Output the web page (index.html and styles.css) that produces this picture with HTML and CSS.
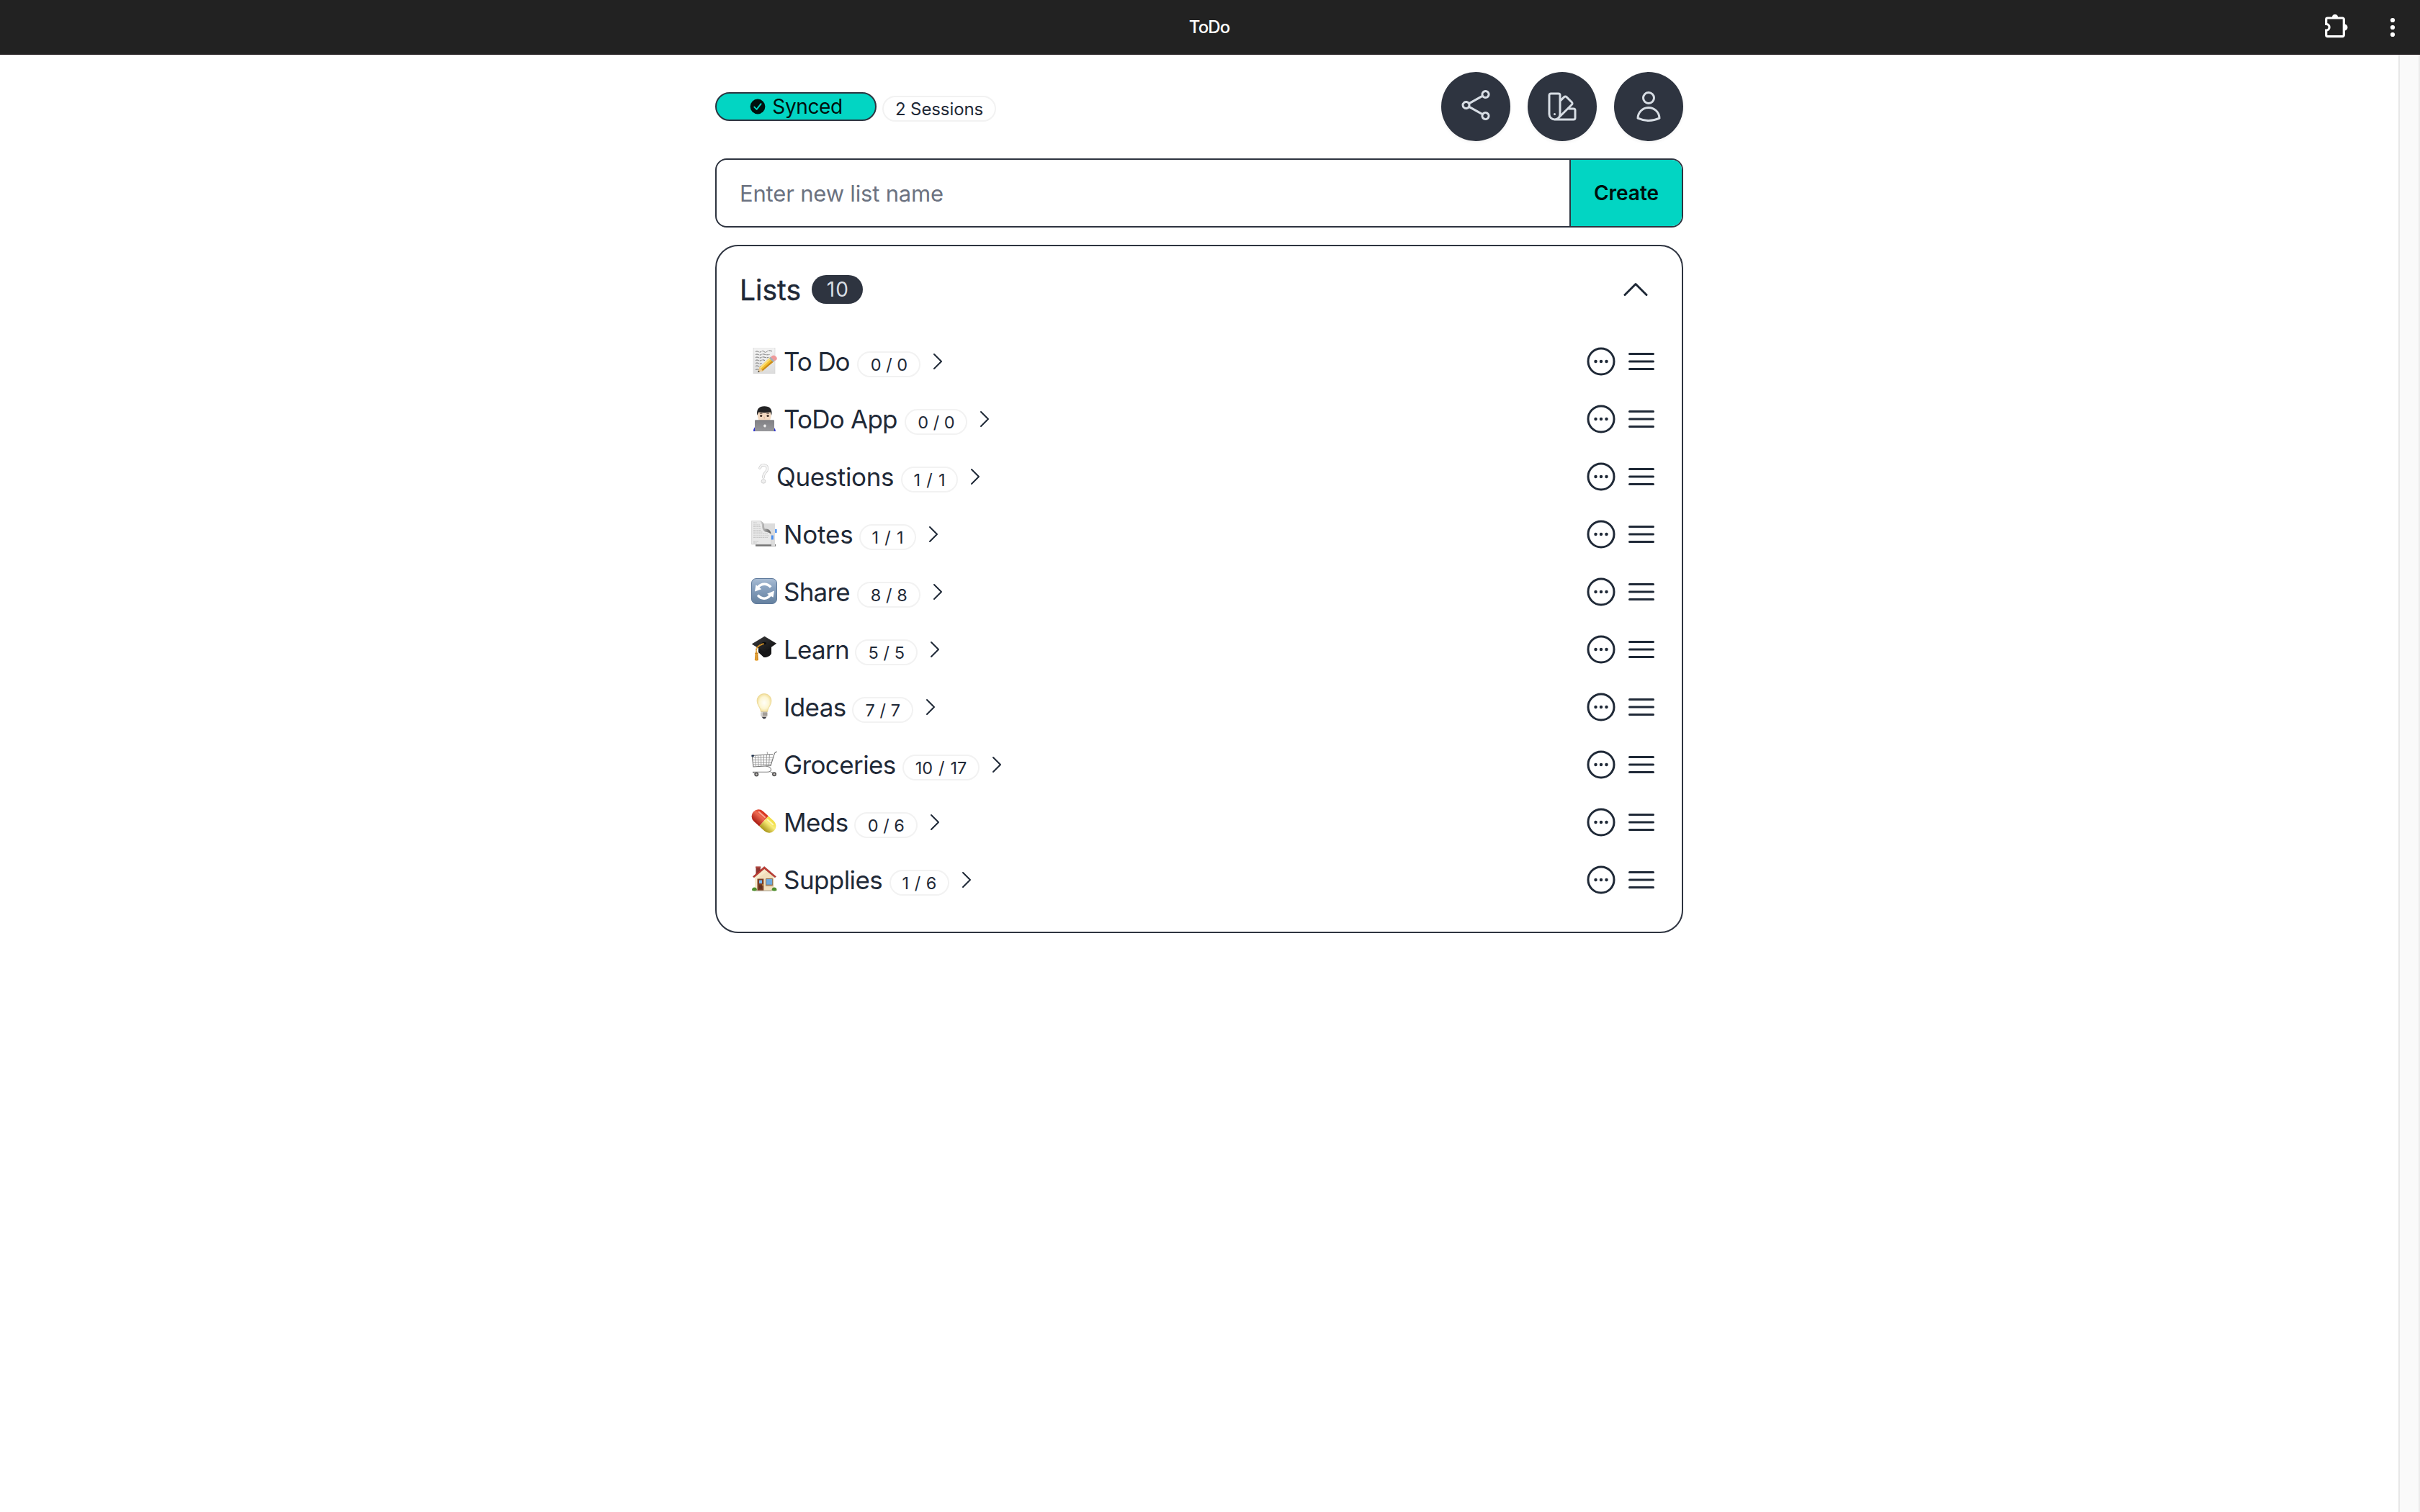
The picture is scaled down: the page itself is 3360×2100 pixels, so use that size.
FILE: index.html
```html
<!DOCTYPE html>
<html lang="en">
<head>
<meta charset="utf-8">
<title>ToDo</title>
<link rel="stylesheet" href="styles.css">
</head>
<body>
<svg class="defs" aria-hidden="true">
  <defs>
    <linearGradient id="gPaper" x1="0" y1="0" x2="0" y2="1"><stop offset="0" stop-color="#f4f4f4"/><stop offset="1" stop-color="#dcdcdc"/></linearGradient>
    <linearGradient id="gBlue" x1="0" y1="0" x2="0" y2="1"><stop offset="0" stop-color="#a9bdd4"/><stop offset=".35" stop-color="#8aa3c0"/><stop offset="1" stop-color="#64809f"/></linearGradient>
    <linearGradient id="gLaptop" x1="0" y1="0" x2="0" y2="1"><stop offset="0" stop-color="#808084"/><stop offset="1" stop-color="#97979b"/></linearGradient>
    <linearGradient id="gCap" x1="0" y1="0" x2="1" y2="1"><stop offset="0" stop-color="#3c3c3e"/><stop offset="1" stop-color="#0c0c0d"/></linearGradient>
    <radialGradient id="gBulb" cx=".5" cy=".5" r=".55"><stop offset="0" stop-color="#fffef8"/><stop offset=".6" stop-color="#fdf6d2"/><stop offset="1" stop-color="#efd88c"/></radialGradient>
    <linearGradient id="gRed" x1="0" y1="0" x2="0" y2="1"><stop offset="0" stop-color="#d42a16"/><stop offset=".4" stop-color="#ee6a50"/><stop offset="1" stop-color="#a81a10"/></linearGradient>
    <linearGradient id="gYellow" x1="0" y1="0" x2="0" y2="1"><stop offset="0" stop-color="#f0dc3c"/><stop offset=".4" stop-color="#f8ec78"/><stop offset="1" stop-color="#a89418"/></linearGradient>
    <linearGradient id="gFold" x1="0" y1="0" x2="1" y2="0"><stop offset="0" stop-color="#d8d8d8"/><stop offset="1" stop-color="#5c5c5c"/></linearGradient>
    <symbol id="more" viewBox="0 0 24 24"><path d="M8.625 12a.375.375 0 1 1-.75 0 .375.375 0 0 1 .75 0Zm0 0H8.25m4.125 0a.375.375 0 1 1-.75 0 .375.375 0 0 1 .75 0Zm0 0H12m4.125 0a.375.375 0 1 1-.75 0 .375.375 0 0 1 .75 0Zm0 0h-.375M21 12a9 9 0 1 1-18 0 9 9 0 0 1 18 0Z"/></symbol>
    <symbol id="bars" viewBox="0 0 24 24"><path d="M3.75 6.75h16.5M3.75 12h16.5m-16.5 5.25h16.5"/></symbol>
    <symbol id="next" viewBox="0 0 24 24"><path d="m8.25 4.5 7.5 7.5-7.5 7.5"/></symbol>
  </defs>
</svg>

<header class="titlebar">
  <span class="titlebar-name">ToDo</span>
  <svg class="puzzle" viewBox="0 0 36 36"><path d="M5.5 7h21a1.8 1.8 0 0 1 1.8 1.8v22a1.8 1.8 0 0 1-1.8 1.8h-21a1.8 1.8 0 0 1-1.8-1.8v-6.6a4.4 4.4 0 0 0 0-8.8V8.8A1.8 1.8 0 0 1 5.5 7Z" fill="none" stroke="#fff" stroke-width="3.2"/><path d="M12 6a4 4 0 0 1 8 0ZM29 15.5a4 4 0 0 1 0 9Z" fill="#fff"/></svg>
  <svg class="kebab" viewBox="0 0 8 28"><circle cx="4" cy="4" r="3.1"/><circle cx="4" cy="14" r="3.1"/><circle cx="4" cy="24" r="3.1"/></svg>
</header>

<div class="viewport">
  <main class="app">
    <div class="toolbar">
      <div class="synced"><svg class="check" viewBox="0 0 22 22"><circle cx="11" cy="11" r="10.4"/><path d="m6.3 11.6 3.3 3.3 6-7.7"/></svg><span>Synced</span></div>
      <div class="pill sessions">2 Sessions</div>
      <div class="actions">
        <button class="round"><svg class="icon lift" viewBox="0 0 24 24"><path d="M7.217 10.907a2.25 2.25 0 1 0 0 2.186m0-2.186c.18.324.283.696.283 1.093s-.103.77-.283 1.093m0-2.186 9.566-5.314m-9.566 7.5 9.566 5.314m0 0a2.25 2.25 0 1 0 3.935 2.186 2.25 2.25 0 0 0-3.935-2.186Zm0-12.814a2.25 2.25 0 1 0 3.933-2.185 2.25 2.25 0 0 0-3.933 2.185Z"/></svg></button>
        <button class="round"><svg class="icon" viewBox="0 0 24 24"><path d="M4.098 19.902a3.75 3.75 0 0 0 5.304 0l6.401-6.402M6.75 21A3.75 3.75 0 0 1 3 17.25V4.125C3 3.504 3.504 3 4.125 3h5.25c.621 0 1.125.504 1.125 1.125v4.072M6.75 21a3.75 3.75 0 0 0 3.75-3.75V8.197M6.75 21h13.125c.621 0 1.125-.504 1.125-1.125v-5.25c0-.621-.504-1.125-1.125-1.125h-4.072M10.5 8.197l2.88-2.88c.438-.439 1.15-.439 1.59 0l3.712 3.713c.44.44.44 1.152 0 1.59l-2.879 2.88M6.75 17.25h.008v.008H6.75v-.008Z"/></svg></button>
        <button class="round"><svg class="icon" viewBox="0 0 24 24"><path d="M15.75 6a3.75 3.75 0 1 1-7.5 0 3.75 3.75 0 0 1 7.5 0ZM4.501 20.118a7.5 7.5 0 0 1 14.998 0A17.933 17.933 0 0 1 12 21.75c-2.676 0-5.216-.584-7.499-1.632Z"/></svg></button>
      </div>
    </div>

    <div class="create">
      <div class="create-input">Enter new list name</div>
      <button class="create-button">Create</button>
    </div>

    <section class="card">
      <div class="card-head">
        <h2>Lists</h2>
        <span class="count">10</span>
        <svg class="icon collapse" viewBox="0 0 24 24"><path d="m4.5 15.75 7.5-7.5 7.5 7.5"/></svg>
      </div>

      <div class="row todo">
        <svg class="emoji" viewBox="0 0 36 36"><path d="M3 0h30v36H3z" fill="url(#gPaper)" stroke="#d2d2d2" stroke-width=".6"/><path d="M6 5.5q2-1.5 4 0t4-.3 4 .2 4-.3 7-.3M6 9.5q2-1.2 4 0t4 0 5-.2 7 0M6 13.5q2-1.2 4 0t4 0 5-.2 5 0M6 17.5q2-1.2 4 0t4 0 5 0M6 21.5q2-1.2 4 0t5 0M6 25.5q2-1.2 4 0t3 0M6 30.5q2-1.2 5 0" fill="none" stroke="#555" stroke-width=".8" stroke-dasharray="5 1 3 1"/><path d="m9.5 34 2-6.5L26 13.500l5.500 5.500L16 32Z" fill="#f4bf2d"/><path d="m11.500 27.500 14.500-14 1.800 1.800L13 29.200Z" fill="#fbdf7a"/><path d="m15.500 32.400 16-13.400-1.700-1.700L14.300 31Z" fill="#c88a1c"/><path d="m9.500 34 2-6.500 4.500 4.500Z" fill="#ecc998"/><path d="m9.300 34.200.8-2.600 1.700 1.700Z" fill="#333"/><path d="m25 14.500 2-2 5.500 5.500-2.100 2Z" fill="#9fb1bd"/><path d="m27 13 2.300-2q2.500-1.500 5 1 2.500 2.500 .9 4.500L32.500 18.500Z" fill="#ef9a9a"/></svg>
        <span class="name">To Do</span><span class="pill">0 / 0</span><svg class="next"><use href="#next"/></svg>
        <svg class="icon more"><use href="#more"/></svg><svg class="icon"><use href="#bars"/></svg>
      </div>
      <div class="row app-dev">
        <svg class="emoji" viewBox="0 0 36 36"><path d="M3 36q0-7 7-8h16q7 1 8 8Z" fill="#2a2fd0"/><path d="M9 11q0-6 9.300-6t9.200 6v5q-1.500 9-9.200 9T9 16Z" fill="#f3dac2"/><path d="M8.300 14C7 5 11 1.500 18 1.300S30 4.500 28.200 14l-1.500-4.500q-8 1.500-16.500 0Z" fill="#222224"/><circle cx="13.700" cy="14.500" r="1.600" fill="#3a2a22"/><circle cx="23.100" cy="14.500" r="1.600" fill="#3a2a22"/><path d="M11.800 11.600q2-1 3.600 0m6 0q2-1 3.600 0" fill="none" stroke="#3a2a22" stroke-width=".8"/><path d="M18 15.500v2.300h1.200" fill="none" stroke="#d3a685" stroke-width=".8"/><rect x="5" y="20.300" width="27" height="15.700" rx="1.200" fill="url(#gLaptop)"/><path d="M18.500 26.600c2.500-1 3 3.200.9 3.800-2.200.7-3.300-3-.9-3.800Z" fill="#eee"/></svg>
        <span class="name">ToDo App</span><span class="pill">0 / 0</span><svg class="next"><use href="#next"/></svg>
        <svg class="icon more"><use href="#more"/></svg><svg class="icon"><use href="#bars"/></svg>
      </div>
      <div class="row questions">
        <svg class="emoji" viewBox="0 0 36 36"><g fill="none" stroke-linecap="round" stroke-linejoin="round"><path d="M12 7q1.500-4.500 6-4t4.500 5q-.4 3-3 5.500-2.500 2.500-2.500 6.500" stroke="#cbcbcb" stroke-width="3.600"/><path d="M12 7q1.500-4.500 6-4t4.500 5q-.4 3-3 5.500-2.500 2.500-2.500 6.500" stroke="#f5f5f5" stroke-width="2.200"/></g><ellipse cx="17" cy="25.500" rx="3" ry="2.700" fill="#efefef" stroke="#c8c8c8" stroke-width=".8"/></svg>
        <span class="name">Questions</span><span class="pill">1 / 1</span><svg class="next"><use href="#next"/></svg>
        <svg class="icon more"><use href="#more"/></svg><svg class="icon"><use href="#bars"/></svg>
      </div>
      <div class="row notes">
        <svg class="emoji" viewBox="0 0 36 36"><path d="M6 33h28v2.800H6z" fill="#777"/><path d="M14 4h19v31.500h-5V33H14z" fill="#dcdcdc"/><path d="M33 12h2.700v5H33z" fill="#5b9bf5"/><path d="M.5.5h13q3 3 4 8 1 4 10 10V33H.5Z" fill="#e8e8e8" stroke="#cacaca" stroke-width=".6"/><path d="M12 .5q6 1 6 7 0 4 1 4 8-1 8.500 7.500-2-3-8.500-3.500Q15 13 15 8 15 3 12 .5Z" fill="url(#gFold)"/><path d="M3 3h5M3 6h9M3 8.500h10M3 11h11M3 13.500h11M3 16h13M3 18.500h20M3 21h22M3 23.500h20M3 29h7M3 31h5" stroke="#bdbdbd" stroke-width=".8" stroke-dasharray="2 .6"/><path d="M28 20.500h2.800v6H28z" fill="#4a90f2"/></svg>
        <span class="name">Notes</span><span class="pill">1 / 1</span><svg class="next"><use href="#next"/></svg>
        <svg class="icon more"><use href="#more"/></svg><svg class="icon"><use href="#bars"/></svg>
      </div>
      <div class="row share">
        <svg class="emoji" viewBox="0 0 36 36"><rect x=".5" y=".5" width="35" height="35" rx="6.500" fill="url(#gBlue)" stroke="#5f7a9b"/><g fill="none" stroke="#fff" stroke-width="3.600"><path d="M8.800 13.500Q12.500 8.300 18.500 8.300q5 0 8.700 4.200"/><path d="M27.200 22.500q-3.700 5.700-9.200 5.700-5.200 0-8.800-4.500"/></g><path d="M5 18.500 6.500 9.200l7.800 6ZM32 17.500l-1.500 9.300-8.500-5Z" fill="#fff"/></svg>
        <span class="name">Share</span><span class="pill">8 / 8</span><svg class="next"><use href="#next"/></svg>
        <svg class="icon more"><use href="#more"/></svg><svg class="icon"><use href="#bars"/></svg>
      </div>
      <div class="row learn">
        <svg class="emoji" viewBox="0 0 36 36"><path d="M10 15.500 18 21l10-6v9.500q-1 3.500-7.500 5.500h-3L10 23Z" fill="#151516"/><path d="M.7 11.500 18.500.8l16.600 10L18.500 22.500Z" fill="url(#gCap)"/><ellipse cx="18" cy="10.500" rx="3" ry="1.700" fill="#0a0a0a"/><path d="M17.500 11Q8 14 7.200 19v6" fill="none" stroke="#e09a28" stroke-width="2" stroke-dasharray="2.200 .3"/><path d="M5.500 24h3.800l.7 10q-2.600 1.600-5.200 0Z" fill="#e8a334"/><path d="M6.500 27v7m2-7v7" stroke="#b8751a" stroke-width=".6"/><path d="M5.300 23.500h4.200v2H5.300z" fill="#c98420"/></svg>
        <span class="name">Learn</span><span class="pill">5 / 5</span><svg class="next"><use href="#next"/></svg>
        <svg class="icon more"><use href="#more"/></svg><svg class="icon"><use href="#bars"/></svg>
      </div>
      <div class="row ideas">
        <svg class="emoji" viewBox="0 0 36 36"><path d="M18 .6c5.800 0 9.900 4.400 9.900 9.800 0 5-3 7.600-4.500 11.600-.5 1.400-.6 2.500-.9 3.500h-9c-.3-1-.4-2.100-.9-3.500-1.500-4-4.500-6.600-4.500-11.600C8.100 5 12.200.6 18 .6Z" fill="url(#gBulb)" stroke="#ead48e" stroke-width=".8"/><path d="M13.600 25.500h8.800v5.700l-2 2.300h-4.800l-2-2.300Z" fill="#b9b4ae"/><path d="M13.600 27.500h8.800m-8.800 2.400h8.800" stroke="#86817b" stroke-width=".8"/><path d="M15 33h6l-1.700 2.300h-2.600Z" fill="#3d3d46"/><path d="M15 26v5.500" stroke="#eee" stroke-width="1.200"/></svg>
        <span class="name">Ideas</span><span class="pill">7 / 7</span><svg class="next"><use href="#next"/></svg>
        <svg class="icon more"><use href="#more"/></svg><svg class="icon"><use href="#bars"/></svg>
      </div>
      <div class="row groceries">
        <svg class="emoji" viewBox="0 0 36 36"><g fill="none" stroke="#8b8b8b" stroke-width=".8"><path d="M1.500 9h29M2 12.500h27.500M2.500 16h26M3 19h24M5.500 7l1 14M9.500 7l.6 14M13.500 6l.3 15M17.500 6v14M21.500 5l-.4 15M25.500 5l-1 15M22 1l1 4"/></g><path d="M35.500.8 32.500 3 27 20.500 3 22 1.200 6.500 30 4.500" fill="none" stroke="#707070" stroke-width="1.100"/><path d="M20 21q7 1 7.500 4.500T22 29.200H2m25 .3 7.500 2M2 30l5 1.500" fill="none" stroke="#808080" stroke-width="1.100"/><path d="M.5 5.500h3.300v2.300H.5z" fill="#152a48"/><circle cx="7.300" cy="32.500" r="3" fill="#555"/><circle cx="32" cy="32.300" r="3" fill="#555"/><circle cx="7.300" cy="32.500" r="1.200" fill="#c8c0bc"/><circle cx="32" cy="32.300" r="1.200" fill="#c8c0bc"/></svg>
        <span class="name">Groceries</span><span class="pill">10 / 17</span><svg class="next"><use href="#next"/></svg>
        <svg class="icon more"><use href="#more"/></svg><svg class="icon"><use href="#bars"/></svg>
      </div>
      <div class="row meds">
        <svg class="emoji" viewBox="0 0 36 36"><g transform="rotate(42 17.500 17.500)"><path d="M17.500 8V27H7.500a9.500 9.500 0 0 1 0-19Z" fill="url(#gRed)"/><path d="M17.500 8V27H27.500a9.500 9.500 0 0 0 0-19Z" fill="url(#gYellow)"/><path d="M4 12.500h11" stroke="#f9a692" stroke-width="2" stroke-linecap="round"/><path d="M20 12.500h10" stroke="#fdf7b6" stroke-width="2" stroke-linecap="round"/></g></svg>
        <span class="name">Meds</span><span class="pill">0 / 6</span><svg class="next"><use href="#next"/></svg>
        <svg class="icon more"><use href="#more"/></svg><svg class="icon"><use href="#bars"/></svg>
      </div>
      <div class="row supplies">
        <svg class="emoji" viewBox="0 0 36 36"><path d="M6.500.8h6.300V9L6.500 13.500Z" fill="#8e3430"/><path d="M6 .5h7.300v2H6z" fill="#b24a42"/><path d="M5 14 18 3l13.500 11v20H5Z" fill="#f1e0bd"/><path d="M5 14 18 3l5 4-12 8v19H5Z" fill="#f7eacb"/><path d="M2.300 14.500 18.200.5l16.300 14-1.600 1.300L18.200 3.700 4 15.800Z" fill="#c23b33" stroke="#7d2420" stroke-width=".5"/><path d="M8.500 17.500h8.800V34H8.500z" fill="#7b3f25"/><path d="M11 19.500h4v4.500h-4z" fill="#77b7ec"/><path d="M11 26.500h4v5h-4z" fill="#63301b"/><circle cx="16" cy="26" r=".8" fill="#f0c040"/><path d="M20.500 17.500h9.200v8.700h-9.200z" fill="#6ca9de" stroke="#8a6a4a"/><path d="M19.800 26.500h10.600v1.200H19.800z" fill="#a88460"/><path d="M1 33.500q0-4 3.500-4T8 33.500q-3 1.800-7 0ZM28.500 33.500q0-4 3.500-4t3.500 4q-3 1.800-7 0Z" fill="#4f8f2e"/><path d="M6.500 33.500h22v1.200h-22z" fill="#b0a48e"/></svg>
        <span class="name">Supplies</span><span class="pill">1 / 6</span><svg class="next"><use href="#next"/></svg>
        <svg class="icon more"><use href="#more"/></svg><svg class="icon"><use href="#bars"/></svg>
      </div>
    </section>
  </main>
  <div class="scroll-track"></div>
</div>
</body>
</html>
```
FILE: styles.css
```css
:root {
  --neutral: #2e3440;
  --neutral-content: #d7dde4;
  --accent: #02d5c3;
  --accent-content: #00100d;
  --base-content: #1f2937;
}

* { box-sizing: border-box; }

body {
  margin: 0;
  height: 2100px;
  overflow: hidden;
  display: flex;
  flex-direction: column;
  background: #fff;
  color: var(--base-content);
  font-family: Inter, "Liberation Sans", sans-serif;
}

button { font: inherit; border: 0; padding: 0; }
svg { display: block; flex: none; }
.defs { position: absolute; width: 0; height: 0; }

/* window title bar */
.titlebar {
  display: flex;
  flex: none;
  align-items: flex-start;
  height: 76px;
  padding-right: 34px;
  background: #222;
  border-bottom: 1px solid #1b1518;
}
.titlebar-name {
  flex: 1;
  padding-left: 132px;
  font-size: 24px;
  font-weight: 500;
  line-height: 75px;
  letter-spacing: -0.9px;
  text-align: center;
  color: #fff;
}
.puzzle { width: 36px; height: 36px; margin: 18px 56px 0 0; }
.kebab { width: 8px; height: 28px; margin-top: 24px; fill: #fff; }

.viewport { flex: 1; display: flex; }
.scroll-track {
  width: 30px;
  background: #fafafa;
  border-left: 2px solid #e8e8e8;
  border-right: 2px solid #ececec;
}

.app {
  flex: 1;
  display: flex;
  flex-direction: column;
  align-items: center;
  gap: 24px;
  padding-top: 24px;
}
.app > * { width: 1344px; }

.icon {
  width: 48px;
  height: 48px;
  fill: none;
  stroke: currentColor;
  stroke-width: 1.5;
  stroke-linecap: round;
  stroke-linejoin: round;
}

/* status and actions */
.toolbar { display: flex; align-items: center; height: 96px; }
.synced {
  display: flex;
  align-items: center;
  justify-content: center;
  gap: 9px;
  width: 224px;
  height: 40px;
  padding-left: 1px;
  border: 2px solid var(--neutral);
  border-radius: 20px;
  background: var(--accent);
  color: var(--accent-content);
  font-size: 28px;
  line-height: 36px;
  letter-spacing: -0.4px;
}
.check { width: 22px; height: 22px; fill: var(--accent-content); }
.check path { fill: none; stroke: var(--accent); stroke-width: 2; stroke-linecap: round; stroke-linejoin: round; }

.pill {
  flex: none;
  width: var(--pill, 88px);
  height: 36px;
  margin-top: 8px;
  border: 2px solid #f2f2f2;
  border-radius: 18px;
  font-size: 23.5px;
  line-height: 34px;
  letter-spacing: var(--pill-track, 0);
  word-spacing: var(--pill-gap, 0);
  text-align: center;
  white-space: nowrap;
}
.sessions { --pill: 158px; --pill-track: -0.1px; margin: 6px 0 0 8px; font-size: 24px; }

.actions { display: flex; gap: 24px; margin-left: auto; }
.round {
  display: grid;
  place-items: center;
  width: 96px;
  height: 96px;
  border-radius: 50%;
  background: var(--neutral);
  color: var(--neutral-content);
  box-shadow: 0 2px 4px rgba(0, 0, 0, .05);
}
.lift { margin-bottom: 4px; }

/* new list form */
.create {
  display: flex;
  height: 96px;
  border: 2px solid var(--neutral);
  border-radius: 16px;
  overflow: hidden;
}
.create-input {
  flex: 1;
  padding-left: 32px;
  font-size: 31px;
  line-height: 93px;
  letter-spacing: -0.18px;
  color: #6b7280;
}
.create-button {
  width: 156px;
  border-left: 2px solid var(--neutral);
  background: var(--accent);
  color: var(--accent-content);
  font-size: 28px;
  font-weight: 600;
  line-height: 93px;
}

/* lists */
.card {
  height: 956px;
  padding: 32px;
  border: 2px solid var(--neutral);
  border-radius: 32px;
}
.card-head { display: flex; align-items: center; height: 56px; margin-bottom: 32px; padding-right: 8px; }
.card-head h2 { width: 100px; margin: 0; padding-top: 2px; font-size: 39px; font-weight: 400; line-height: 56px; -webkit-text-stroke: .4px; }
.count {
  width: 71px;
  height: 40px;
  border-radius: 20px;
  background: var(--neutral);
  color: var(--neutral-content);
  font-size: 28px;
  line-height: 40px;
  letter-spacing: 1.2px;
  text-indent: 2px;
  text-align: center;
}
.collapse { margin-left: auto; }

.row { display: flex; align-items: center; height: 80px; padding-left: 16px; }
.emoji { width: 36px; height: 36px; margin: -2px var(--emoji-gap, 9px) 0 0; }
.name {
  width: var(--name);
  flex: none;
  font-size: 35px;
  line-height: 80px;
  letter-spacing: var(--track);
  white-space: nowrap;
}
.next { width: 32px; height: 32px; margin-left: 8px; fill: none; stroke: currentColor; stroke-width: 1.5; stroke-linecap: round; stroke-linejoin: round; }
.more { margin: 0 8px 0 auto; }

.todo { --name: 102px; --track: -1.1px; --pill-track: -.8px; --pill-gap: 1.6px; }
.app-dev { --name: 168px; --track: -.78px; --pill: 87px; --pill-track: -.8px; --pill-gap: 1.6px; }
.questions { --emoji-gap: -1px; --name: 173px; --track: -.37px; --pill: 79px; --pill-gap: 1.6px; }
.notes { --name: 105px; --track: -.15px; --pill: 79px; --pill-gap: 1.6px; }
.share { --name: 102px; --track: -.78px; --pill-track: -.5px; --pill-gap: 1.2px; }
.learn { --name: 99px; --track: -.72px; --pill: 87px; --pill-track: -.5px; --pill-gap: 1.2px; }
.ideas { --name: 95px; --track: -.62px; --pill: 85px; --pill-track: -.5px; --pill-gap: 1.2px; }
.groceries { --name: 165px; --track: -.61px; --pill: 107px; --pill-gap: 1.4px; }
.meds { --name: 98px; --track: -.6px; --pill-track: -.6px; --pill-gap: 1.2px; }
.supplies { --name: 147px; --track: -.58px; --pill: 83px; --pill-gap: 1px; }
```
